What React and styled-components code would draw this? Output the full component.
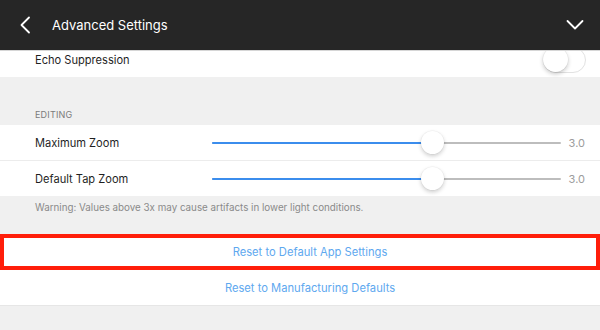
import React from 'react';
import styled, { createGlobalStyle } from 'styled-components';

const GlobalStyle = createGlobalStyle`
  html, body {
    margin: 0;
    padding: 0;
    background: #f0f0f0;
    font-family: "Inter", "Liberation Sans", sans-serif;
    -webkit-font-smoothing: antialiased;
  }
`;

const Screen = styled.div`
  width: 600px;
  height: 330px;
  overflow: hidden;
  display: flex;
  flex-direction: column;
  background: #f0f0f0;
`;

const Header = styled.header`
  position: relative;
  z-index: 2;
  height: 50px;
  flex-shrink: 0;
  display: flex;
  align-items: center;
  background: #262626;
  border-bottom: 1px solid #d6d6d6;
  color: #fff;
  padding: 0 16px 0 19px;
`;

const IconButton = styled.button`
  background: none;
  border: none;
  padding: 0;
  display: flex;
  align-items: center;
  justify-content: center;
  color: #fff;
  cursor: pointer;
`;

const Title = styled.h1`
  margin: 0 0 0 21px;
  flex: 1;
  font-size: 13px;
  font-weight: 400;
`;

const Content = styled.div`
  margin-top: -9px;
  display: flex;
  flex-direction: column;
`;

const Group = styled.div`
  background: #fff;
  display: flex;
  flex-direction: column;
`;

const Row = styled.div`
  height: 35px;
  display: flex;
  align-items: center;
  padding: 0 15px 0 35px;
  box-sizing: border-box;
  position: relative;

  & + & {
    border-top: 1px solid #ececec;
    height: 36px;
  }
`;

const Label = styled.span`
  font-size: 11.1px;
  color: #1f1f1f;
  width: 177px;
  flex-shrink: 0;
`;

const SectionHeader = styled.div`
  height: 48px;
  display: flex;
  align-items: flex-end;
  padding: 0 35px 5px;
  box-sizing: border-box;
  font-size: 9px;
  color: #7c7c7c;
  letter-spacing: 0.2px;
`;

const Footer = styled.div`
  height: 38px;
  padding: 6px 35px 0;
  box-sizing: border-box;
  font-size: 9.8px;
  color: #8a8a8a;
`;

const Toggle = styled.div`
  margin-left: auto;
  width: 41px;
  height: 24px;
  border-radius: 13px;
  border: 1px solid #e2e2e2;
  background: #fff;
  position: relative;
  margin-right: -1px;

  &::after {
    content: "";
    position: absolute;
    left: -1px;
    top: -1px;
    width: 25px;
    height: 25px;
    border-radius: 50%;
    background: #fff;
    box-shadow: 0 2px 4px rgba(0, 0, 0, 0.22), 0 0 0 0.5px rgba(0, 0, 0, 0.06);
  }
`;

const SliderTrack = styled.div`
  flex: 1;
  height: 2px;
  background: #bdbdbd;
  border-radius: 1px;
  position: relative;
`;

const SliderFill = styled.div`
  position: absolute;
  left: 0;
  top: 0;
  bottom: 0;
  background: #3b8ded;
  border-radius: 1px;
`;

const Knob = styled.div`
  position: absolute;
  top: 50%;
  width: 23px;
  height: 23px;
  margin: -12px 0 0 -11.5px;
  border-radius: 50%;
  background: #fff;
  box-shadow: 0 2px 4px rgba(0, 0, 0, 0.2), 0 0 0 0.5px rgba(0, 0, 0, 0.05);
`;

const Value = styled.span`
  width: 24px;
  text-align: right;
  font-size: 11px;
  color: #9c9c9c;
`;

const ActionGroup = styled.div`
  background: #fff;
  border-bottom: 1px solid #e6e6e6;
  display: flex;
  flex-direction: column;
`;

const ActionRow = styled.button`
  height: ${p => (p.$highlight ? '36px' : '35px')};
  border: none;
  background: #fff;
  font-family: inherit;
  font-size: 11.2px;
  color: #5ea8ef;
  cursor: pointer;
  box-sizing: border-box;
  box-shadow: ${p => (p.$highlight ? 'inset 0 0 0 4px #ff1e0a' : 'none')};
  padding: 0 0 0 20px;
`;

const Slider = ({ percent }) => (
  <SliderTrack>
    <SliderFill style={{ width: `${percent}%` }} />
    <Knob style={{ left: `${percent}%` }} />
  </SliderTrack>
);

const SliderRow = ({ label, percent, value }) => (
  <Row>
    <Label>{label}</Label>
    <Slider percent={percent} />
    <Value>{value}</Value>
  </Row>
);

export default function App() {
  return (
    <>
      <GlobalStyle />
      <Screen>
        <Header>
          <IconButton aria-label="Back">
            <svg width="12" height="18" viewBox="0 0 12 18" fill="none">
              <path d="M10 1.5L2.5 9L10 16.5" stroke="#fff" strokeWidth="1.8" strokeLinecap="round" strokeLinejoin="round" />
            </svg>
          </IconButton>
          <Title>Advanced Settings</Title>
          <IconButton aria-label="Collapse">
            <svg width="18" height="12" viewBox="0 0 18 12" fill="none">
              <path d="M1.5 2L9 9.5L16.5 2" stroke="#fff" strokeWidth="1.8" strokeLinecap="round" strokeLinejoin="round" />
            </svg>
          </IconButton>
        </Header>
        <Content>
          <Group>
            <Row>
              <Label>Echo Suppression</Label>
              <Toggle />
            </Row>
          </Group>
          <SectionHeader>EDITING</SectionHeader>
          <Group>
            <SliderRow label="Maximum Zoom" percent={63.3} value="3.0" />
            <SliderRow label="Default Tap Zoom" percent={63.3} value="3.0" />
          </Group>
          <Footer>Warning: Values above 3x may cause artifacts in lower light conditions.</Footer>
          <ActionGroup>
            <ActionRow $highlight>Reset to Default App Settings</ActionRow>
            <ActionRow>Reset to Manufacturing Defaults</ActionRow>
          </ActionGroup>
        </Content>
      </Screen>
    </>
  );
}
